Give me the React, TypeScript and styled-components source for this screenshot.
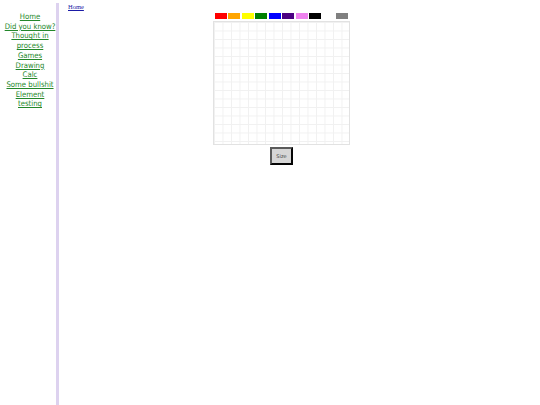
import React from "react";
import styled, { createGlobalStyle } from "styled-components";

const GlobalStyle = createGlobalStyle`
  html, body {
    margin: 0;
    padding: 0;
    background: #ffffff;
  }
`;

const Page = styled.div`
  display: flex;
  min-height: 405px;
  padding-left: 4px;
`;

const Sidebar = styled.nav`
  width: 52px;
  margin-top: 3px;
  padding-top: 9px;
  border-right: 3px solid #ddd2ef;
  display: flex;
  flex-direction: column;
  align-items: center;
  font-family: "DejaVu Sans Condensed", "DejaVu Sans", sans-serif;
  font-size: 7.7px;
  line-height: 9.7px;
  text-align: center;
`;

const NavLink = styled.a`
  color: #23872a;
  text-decoration: underline;
`;

const Main = styled.main`
  flex: 1;
  padding-top: 3px;
`;

const TopLink = styled.a`
  display: block;
  margin-left: 9px;
  font-family: "Liberation Serif", "Times New Roman", serif;
  font-size: 6.5px;
  line-height: 8px;
  color: #1a1aa6;
  text-decoration: underline;
`;

const Board = styled.div`
  width: 137px;
  margin-left: 154px;
  display: flex;
  flex-direction: column;
  align-items: center;
`;

const Palette = styled.div`
  display: flex;
  gap: 1.5px;
  margin-top: 2px;
  height: 6px;
`;

const Swatch = styled.div<{ $color: string }>`
  width: 12px;
  height: 6px;
  background: ${(p) => p.$color};
`;

const Canvas = styled.div`
  box-sizing: border-box;
  width: 137px;
  height: 124px;
  margin-top: 2px;
  border: 1px solid #e2e2e2;
  background-color: #ffffff;
  background-image: linear-gradient(to right, #f1f1f1 1px, transparent 1px),
    linear-gradient(to bottom, #f1f1f1 1px, transparent 1px);
  background-size: 8.5px 8.5px;
`;

const SizeButton = styled.button`
  box-sizing: border-box;
  width: 23px;
  height: 18px;
  margin-top: 2px;
  padding: 0;
  border: 2px outset #5a5a5a;
  background: #d6d6d6;
  font-family: "DejaVu Sans", sans-serif;
  font-size: 5px;
  color: #444;
`;

const links = [
  "Home",
  "Did you know?",
  "Thought in process",
  "Games",
  "Drawing",
  "Calc",
  "Some bullshit",
  "Element testing",
];

const colors = [
  "#ff0000",
  "#ffa500",
  "#ffff00",
  "#008000",
  "#0000ff",
  "#4b0082",
  "#ee82ee",
  "#000000",
  "#ffffff",
  "#808080",
];

export default function App() {
  return (
    <>
      <GlobalStyle />
      <Page>
        <Sidebar>
          {links.map((l) => (
            <NavLink key={l} href="#">
              {l}
            </NavLink>
          ))}
        </Sidebar>
        <Main>
          <TopLink href="#">Home</TopLink>
          <Board>
            <Palette>
              {colors.map((c, i) => (
                <Swatch key={i} $color={c} />
              ))}
            </Palette>
            <Canvas />
            <SizeButton>Size</SizeButton>
          </Board>
        </Main>
      </Page>
    </>
  );
}
